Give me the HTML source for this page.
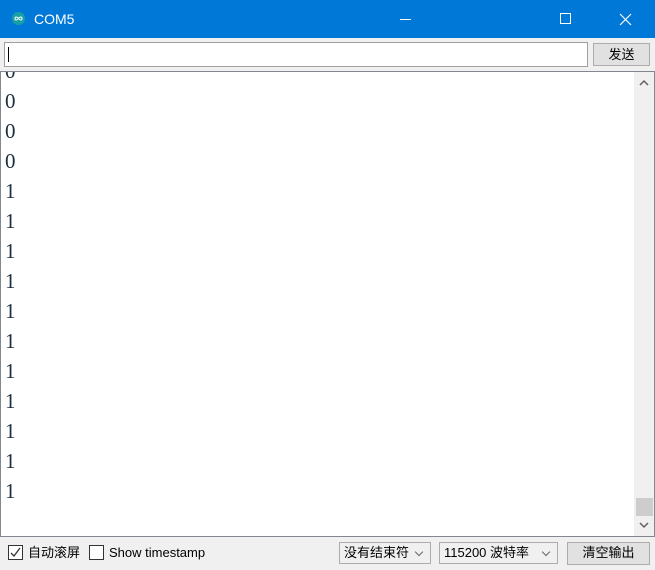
<!DOCTYPE html>
<html><head><meta charset="utf-8"><style>
*{margin:0;padding:0;box-sizing:border-box}
body{width:655px;height:570px;overflow:hidden;background:#f0f0f0;font-family:"Liberation Sans","Noto Sans CJK SC",sans-serif;position:relative}
.title{position:absolute;left:0;top:0;width:655px;height:38px;background:#0078d7;color:#fff}
.title .t{position:absolute;left:34px;top:11px;font-size:14px;line-height:16px}
.logo{position:absolute;left:12px;top:12px;width:13px;height:13px;border-radius:50%;background:#17a1a5}
.inp{position:absolute;left:4px;top:42px;width:584px;height:25px;background:#fff;border:1px solid #a0a0a0}
.inp i{position:absolute;left:3px;top:4px;width:1px;height:15px;background:#000}
.btn{position:absolute;background:#e1e1e1;border:1px solid #adadad;font-size:13px;text-align:center;color:#000}
.area{position:absolute;left:0;top:71px;width:655px;height:466px;background:#fff;border:1px solid #828790;overflow:hidden}
.lines{position:absolute;left:4px;top:-16px;font-family:"Liberation Serif",serif;font-size:21px;line-height:30px;color:#1c2f40}
.sb{position:absolute;right:0;top:0;width:20px;height:464px;background:#f0f0f0}
.thumb{position:absolute;left:2px;top:426px;width:17px;height:18px;background:#cdcdcd}
.cb{position:absolute;top:545px;width:15px;height:15px;border:1px solid #333;background:#fff}
.lbl{position:absolute;top:545px;font-size:13px;line-height:16px}
.sel{position:absolute;top:542px;height:22px;background:#f0f0f0;border:1px solid #acacac;font-size:13px;line-height:16px;padding:2px 4px}
.sel:after{content:"";position:absolute;right:8px;top:6px;width:5px;height:5px;border-right:1px solid #666;border-bottom:1px solid #666;transform:rotate(45deg)}
</style></head><body>
<div class="title"><div class="logo"><svg width="13" height="13"><path d="M6.5 6.5C5 4.5 3 4.5 3 6.5S5 8.5 6.5 6.5C8 4.5 10 4.5 10 6.5S8 8.5 6.5 6.5Z" fill="none" stroke="#fff" stroke-width="1"/></svg></div><div class="t">COM5</div>
<svg style="position:absolute;left:0;top:0" width="655" height="38"><line x1="400" y1="19.5" x2="411" y2="19.5" stroke="#fff"/><rect x="560.5" y="13.5" width="10" height="10" fill="none" stroke="#fff"/><path d="M620 14L631 25M631 14L620 25" stroke="#fff" stroke-width="1.2"/></svg></div>
<div class="inp"><i></i></div>
<div class="btn" style="left:593px;top:43px;width:57px;height:23px;line-height:21px">发送</div>
<div class="area"><div class="lines">0<br>0<br>0<br>0<br>1<br>1<br>1<br>1<br>1<br>1<br>1<br>1<br>1<br>1<br>1</div>
<div class="sb"><svg style="position:absolute;left:0;top:0" width="20" height="464"><path d="M6 13L10 9L14 13" fill="none" stroke="#606060" stroke-width="1.5"/><path d="M6 451L10 455L14 451" fill="none" stroke="#606060" stroke-width="1.5"/></svg><div class="thumb"></div></div></div>
<div class="cb" style="left:8px"><svg width="13" height="13"><path d="M2 7L5 10L11 2" fill="none" stroke="#333" stroke-width="1.3"/></svg></div>
<div class="lbl" style="left:28px">自动滚屏</div>
<div class="cb" style="left:89px"></div>
<div class="lbl" style="left:109px">Show timestamp</div>
<div class="sel" style="left:339px;width:92px">没有结束符</div>
<div class="sel" style="left:439px;width:119px">115200 波特率</div>
<div class="btn" style="left:567px;top:542px;width:83px;height:23px;line-height:20px">清空输出</div>
</body></html>
